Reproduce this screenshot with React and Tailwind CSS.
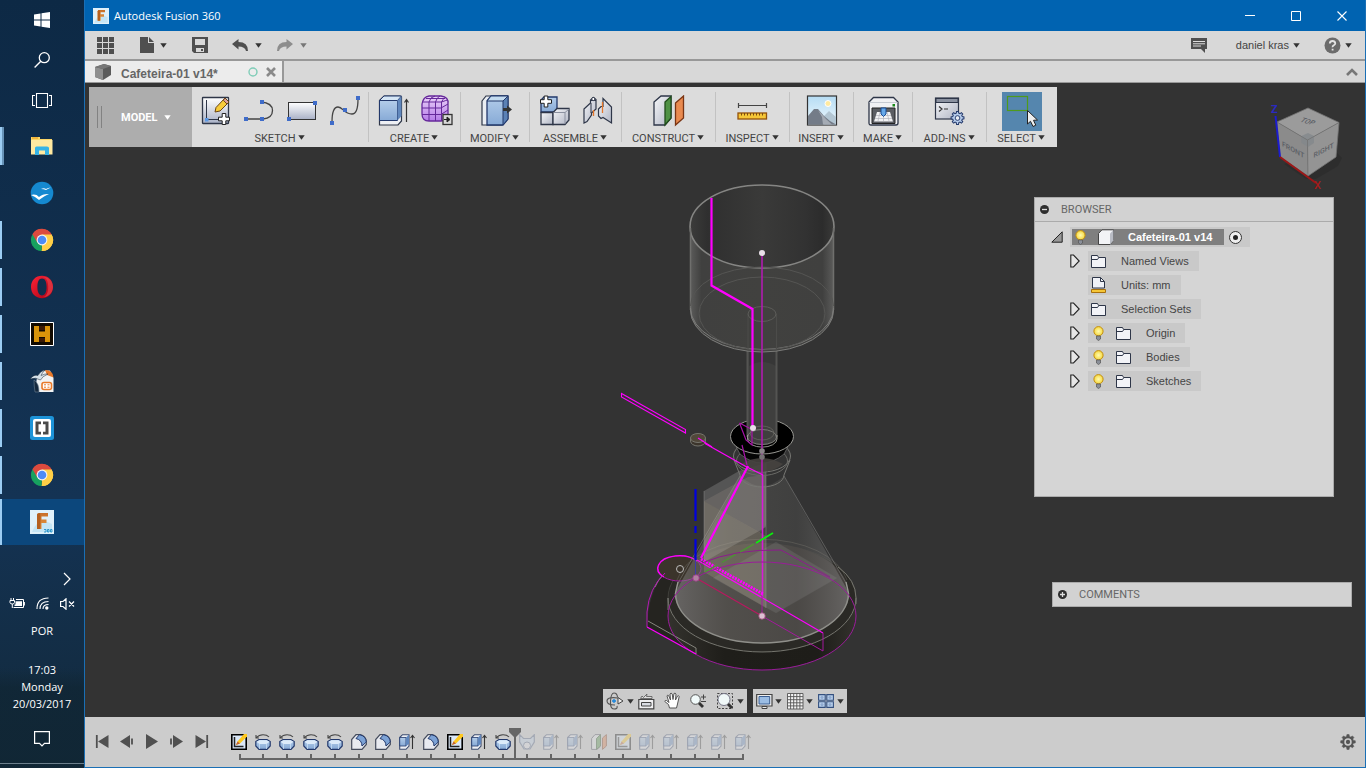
import React from "react";

const Svg = ({ w = 32, h = 32, vb, className = "", children, ...rest }) => (
  <svg width={w} height={h} viewBox={vb || `0 0 ${w} ${h}`} fill="none" className={"block shrink-0 " + className} aria-hidden="true" {...rest}>
    {children}
  </svg>
);

const Caret = ({ color = "#333", className = "" }) => (
  <Svg w={7} h={5} className={className}><path d="M.3 .3H6.700L3.500 4.700Z" fill={color} /></Svg>
);

/* ---------- shared gradients ---------- */
const Defs = () => (
  <svg width="0" height="0" className="absolute" aria-hidden="true">
    <defs>
      <linearGradient id="blueF" x1="0" y1="0" x2="0" y2="1"><stop offset="0" stopColor="#b3cdea" /><stop offset="1" stopColor="#87aad6" /></linearGradient>
      <linearGradient id="greyF" x1="0" y1="0" x2="1" y2="1"><stop offset="0" stopColor="#f6f7f9" /><stop offset="1" stopColor="#b0b5c4" /></linearGradient>
      <linearGradient id="whiteF" x1="0" y1="0" x2="0" y2="1"><stop offset="0" stopColor="#ffffff" /><stop offset="1" stopColor="#a9b1c6" /></linearGradient>
      <linearGradient id="purpF" x1="0" y1="0" x2="0" y2="1"><stop offset="0" stopColor="#ead2f8" /><stop offset="1" stopColor="#b57be8" /></linearGradient>
      <linearGradient id="skyF" x1="0" y1="0" x2="0" y2="1"><stop offset="0" stopColor="#b5dcf4" /><stop offset="1" stopColor="#eef8fd" /></linearGradient>
      <linearGradient id="orangeF" x1="0" y1="0" x2="0" y2="1"><stop offset="0" stopColor="#c8702a" /><stop offset="1" stopColor="#e7983f" /></linearGradient>
      <linearGradient id="operaF" x1="0" y1="0" x2="1" y2="1"><stop offset="0" stopColor="#ff2437" /><stop offset="1" stopColor="#a70014" /></linearGradient>
      <radialGradient id="bulbF"><stop offset="0" stopColor="#fffbb0" /><stop offset="1" stopColor="#f5d840" /></radialGradient>
    </defs>
  </svg>
);

/* ---------- taskbar ---------- */
const WinLogo = () => (<Svg w={16} h={16}><path d="M0 2.4 6.5 1.4V7.5H0ZM7.5 1.2 16 0V7.5H7.5ZM0 8.5H6.5V14.6L0 13.6ZM7.5 8.5H16V16L7.5 14.8Z" fill="#fff" /></Svg>);
const SearchI = () => (<Svg w={16} h={16}><circle cx="10.3" cy="5.7" r="5" stroke="#fff" strokeWidth="1.3" /><path d="M6.8 9.3 .6 15.5" stroke="#fff" strokeWidth="1.4" /></Svg>);
const TaskView = () => (<Svg w={20} h={15}><path d="M4.5 .5H15.5V14.5H4.5ZM3 2.5H.5V12.5H3M17 2.5H19.5V12.5H17" stroke="#fff" strokeWidth="1.1" /></Svg>);
const Explorer = () => (<Svg w={22} h={18}><path d="M0 0H9V2H21V16H0Z" fill="#fbd667" /><path d="M0 3H21.5V17.5H0Z" fill="#ffe9a1" /><path d="M1 1H7" stroke="#f0a92b" strokeWidth="1.4" /><path d="M4 18V11Q4 9.5 5.500 9.500H16Q18 9.500 18 11V18H14V13.500H8V18Z" fill="#36b3e6" /></Svg>);
const OpenOffice = () => (<Svg w={24} h={24}><circle cx="12" cy="12" r="11.3" fill="#1589d0" /><path d="M1 14Q6 12.5 9 16 13 12.500 19 13 15 14.500 9 19 5 15.500 1 14ZM11 8Q14 6.500 16 8 18 6.500 21 6.500 18 7.800 16 9 14 8 11 8Z" fill="#fff" /></Svg>);
const Chrome = () => (
  <Svg w={24} h={24}>
    <path d="M12 12 2.500 6.300A11.100 11.100 0 0 1 21.600 6.500Z" fill="#db4a3e" />
    <path d="M12 12 21.600 6.500A11.100 11.100 0 0 1 11.500 23.100Z" fill="#ffcf47" />
    <path d="M12 12 11.500 23.100A11.100 11.100 0 0 1 2.500 6.300Z" fill="#17a15f" />
    <path d="M12 6.500H21.600A11 11 0 0 0 2.500 6.300L7.300 14.600Z" fill="#db4a3e" />
    <path d="M16.700 14.700 11.500 23.100A11.100 11.100 0 0 0 21.600 6.500H12Z" fill="#ffcf47" />
    <circle cx="12" cy="12" r="5.400" fill="#f4f4f4" /><circle cx="12" cy="12" r="4.300" fill="#4c8bf5" />
  </Svg>
);
const Opera = () => (<Svg w={24} h={24}><path fillRule="evenodd" d="M12 .8C5.500 .8 1 5.500 1 12S5.500 23.200 12 23.200 23 18.500 23 12 18.500 .8 12 .8ZM12 3.600C15.200 3.600 16.600 7 16.600 12S15.200 20.400 12 20.400 7.400 17 7.400 12 8.800 3.600 12 3.600Z" fill="url(#operaF)" /><path d="M13 2.200C20 2 20 22 13 21.800 16.500 23 23 18.500 23 12S17.500 1 13 2.200Z" fill="#e8404a" opacity=".7" /></Svg>);
const HIcon = () => (<Svg w={24} h={24}><path d="M.5 .5H23.500V23.500H.5Z" fill="#120a00" stroke="#fff" /><path d="M4 4H9V9.500H15V4H20V20H15V15H9V20H4Z" fill="#d9940a" /><path d="M9 4H15V8H9ZM9 16H15V20H9Z" fill="#3a1a06" /></Svg>);
const Impress = () => (<Svg w={24} h={24}><path d="M7 8 14 1.500H20L23.500 9V23H5Z" fill="#f1f3f4" /><path d="M4 11Q9 14 9 23H5Q4 17 4 11Z" fill="#14283d" stroke="#6d8294" strokeWidth=".6" /><path d="M15 1Q23 1 23.500 8.500L17 6Z" fill="#e8792a" /><path d="M0 10Q4 5 8 6.500 10 2 15 1 12 4 11 6.500 15 4.500 18 5 12 7.500 10.500 11 6 8 0 10Z" fill="#d5e0e8" stroke="#123" strokeWidth=".5" /><rect x="12" y="13.500" width="9.500" height="7" rx="2" stroke="#e8792a" strokeWidth="1.600" fill="#fff" /><path d="M14 15.800H16M17.500 15.800H19.500M14 18.200H16M17.500 18.200H19.500" stroke="#e8792a" /></Svg>);
const Brackets = () => (<Svg w={24} h={24}><rect width="24" height="24" rx="2.500" fill="#1d93d8" /><rect x="3" y="3" width="18" height="18" rx="2" fill="#fff" /><path d="M11 5.500H5.500V18.500H11V15.800H8.500V8.200H11ZM13 5.500H18.500V18.500H13V15.800H15.500V8.200H13Z" fill="#4a4a4a" /></Svg>);
const FusionI = ({ s = 24, small }) => (
  <Svg w={s} h={s} vb="0 0 24 24"><rect width="24" height="24" fill="#e0f1fa" /><path d="M2 22Q8 6 22 14V22Z" fill="#c4e5f5" /><path d="M7 19V5Q7 3 10 3H18L18 6.500H11.500V9.500H16.500V13H11.500V19Z" fill="url(#orangeF)" /><path d="M7 19V5Q7 3 10 3L10.500 6.500V19Z" fill="#b5601f" />{small && <path d="M14 19.500h2v2.500h-2M17.500 19.500h1.500v2.500h-1.500zM20.500 19.500h1.500v2.500h-1.500z" stroke="#1f8fc8" strokeWidth=".9" />}</Svg>
);

const tasks = [
  ["File Explorer", Explorer, "double"],
  ["OpenOffice", OpenOffice, "none"],
  ["Chrome", Chrome, "on"],
  ["Opera", Opera, "on"],
  ["H editor", HIcon, "on"],
  ["Impress", Impress, "on"],
  ["Brackets", Brackets, "on"],
  ["Chrome window", Chrome, "on"],
];

function Taskbar() {
  return (
    <nav aria-label="Taskbar" className="relative flex w-[84px] shrink-0 flex-col items-center bg-linear-to-b from-[#0d2945] via-[#143354] via-65% to-[#12293b] text-[11px] text-white">
      <button aria-label="Start" className="grid h-10 w-full place-items-center"><WinLogo /></button>
      <button aria-label="Search" className="grid h-10 w-full place-items-center"><SearchI /></button>
      <button aria-label="Task view" className="grid h-10 w-full place-items-center"><TaskView /></button>
      <div className="mt-[3px] flex w-full flex-col gap-px">
        {tasks.map(([name, Icon, mark]) => (
          <button key={name} aria-label={name} className="relative grid h-[46px] w-full place-items-center">
            {mark !== "none" && <span className="absolute top-1 left-0 h-[38px] w-[2px] bg-[#9ccdf3]" />}
            {mark === "double" && <span className="absolute top-1 left-[2px] h-[38px] w-[2px] bg-[#6793b8]" />}
            <Icon />
          </button>
        ))}
        <button aria-label="Fusion 360" className="grid h-[46px] w-full place-items-center border-l-2 border-[#9ccdf3] bg-[#0c477c] pr-[2px]"><FusionI small /></button>
      </div>
      <div className="mt-auto flex w-full flex-col items-center bg-linear-to-b from-transparent from-50% to-[#102532]/70 to-60%">
        <button aria-label="Show hidden icons" className="mr-[9px] self-end p-1"><Svg w={8} h={14}><path d="M1 1 7 7 1 13" stroke="#fff" strokeWidth="1.200" /></Svg></button>
        <div className="mt-[7px] flex items-center gap-[11px]">
          <Svg w={16} h={12}><path d="M2 0V2M4.500 0V2M1 2.500H5.500V4.500Q5.500 6 3.300 6T1 4.500ZM3.300 6V10" stroke="#fff" /><path d="M7 1.500H14.500V9.500H4.500" stroke="#fff" /><path d="M6.500 3.300H13V8H5.500V6.500H6.500Z" fill="#fff" /><path d="M15.300 4V7.500" stroke="#fff" strokeWidth="1.200" /></Svg>
          <Svg w={13} h={13}><path d="M1 12Q1 1 12.500 1M4 12Q4 4.500 12.500 4.500M7 12Q7 7.500 12.500 7.500" stroke="#fff" strokeWidth="1.100" /><circle cx="10.800" cy="11" r="1.700" fill="#fff" /></Svg>
          <Svg w={15} h={12}><path d="M.6 3.500H3L6 .8V11.200L3 8.500H.6ZM9 3.500 14 8.500M14 3.500 9 8.500" stroke="#fff" strokeWidth="1.200" /></Svg>
        </div>
        <span className="mt-[13px] leading-4">POR</span>
        <div className="mt-[22px] text-center leading-[17px]">17:03<br />Monday<br />20/03/2017</div>
        <button aria-label="Notifications" className="mt-[19px] mb-[15px]"><Svg w={16} h={17}><path d="M.6 .6H15.400V12.400H10.500L8 15 5.500 12.400H.6Z" stroke="#fff" strokeWidth="1.200" /></Svg></button>
        <div className="mb-1 h-px w-full bg-[#6c7f8c]" />
      </div>
    </nav>
  );
}

/* ---------- ribbon icons ---------- */
const dk = "#2e3648";
const bl = "#22386b";
const SketchNew = () => (<Svg><rect x="2.500" y="2.500" width="26" height="26" fill="url(#whiteF)" stroke={dk} strokeWidth="1.300" rx=".5" /><path d="M6.500 5V24.500H20" stroke={dk} /><rect x="5" y="23" width="3.500" height="3.500" fill="#5d9ae6" /><path d="M15 17 16 12.500 25 3 29 7 20 16Z" fill="#f7cb3a" stroke="#6a4512" /><path d="M25 3 29 7 27 9 23.300 5.200Z" fill="#e0a0a0" stroke="#6a4512" /><path d="M22.200 18.500H25.800V22.200H29.500V25.800H25.800V29.500H22.200V25.800H18.500V22.200H22.200Z" fill="#fff" stroke="#222" /></Svg>);
const Node = ({ x, y }) => <rect x={x - 2} y={y - 2} width="4" height="4" fill="#3f6cc9" />;
const LineArc = () => (<Svg><path d="M3 24H20Q29.500 23 29.500 15.500T18 7" stroke="#444" strokeWidth="1.300" /><Node x={3} y={24} /><Node x={19} y={24} /><Node x={19} y={7} /></Svg>);
const Rect2 = () => (<Svg><rect x="2.500" y="7.500" width="27" height="17" fill="url(#whiteF)" stroke="#333" /><Node x={3} y={24} /><Node x={29} y={8} /></Svg>);
const Spline = () => (<Svg><path d="M3 27Q3 12 9 12C14 12 15 19 23 19Q29 19 29 4" stroke="#444" strokeWidth="1.300" /><Node x={3} y={28} /><Node x={16} y={15} /><Node x={29} y={3} /></Svg>);
const Extrude = () => (<Svg><path d="M1.500 5.500 6 1H22L23.500 2V26L20 30H1.500Z" fill="#eef0f4" stroke={dk} strokeWidth="1.200" /><path d="M1.500 5.500H19.500V25.500H1.500Z" fill="url(#blueF)" stroke={bl} /><path d="M1.500 5.500 6 1H23.500L19.500 5.500Z" fill="#d5e6f6" stroke={bl} /><path d="M19.500 5.500 23.500 1.500V21L19.500 25.500Z" fill="#6188bd" /><path d="M28.500 27V5M26.500 7.500 28.500 4.500 30.500 7.500" stroke="#333" strokeWidth="1.200" /></Svg>);
const Form = () => (<Svg><path d="M8 1H20Q28 2 27 9V20Q26 26 20 26H8Q1 26 1 19V9Q2 2 8 1Z" fill="url(#purpF)" stroke="#65289a" strokeWidth="1.300" /><path d="M1 13H20L27 9M1 19.500H20L27 15M8 26V7M14.500 26V7M20.500 26V7M1.500 7H20.500Q26 5 26.500 5M8 7Q9 2 14 1M14.500 7Q16 2 19 1M20.500 7Q22 4 24 2.500M5 3.500H24" stroke="#65289a" /><rect x="22" y="19.500" width="9" height="10" fill="#d8d8d8" stroke="#333" strokeWidth="1.300" /><path d="M23 24.500H26.500M26 22 29 24.500 26 27Z" stroke="#222" fill="#222" /></Svg>);
const PressPull = () => (<Svg><path d="M2 6 6 1H27V24L22 30H2Z" fill="#e9edf2" stroke={dk} strokeWidth="1.200" /><path d="M7 6 11 1H28V24L23 30H7Z" fill="url(#blueF)" stroke={bl} strokeWidth="1.300" /><path d="M7 6 11 1H28L23 6Z" fill="#c3dbf0" stroke={bl} /><path d="M23 6 28 1V24L23 30Z" fill="#5b81b5" stroke={bl} /><path d="M23 13H27V10.500L32 14.500 27 18.500V16H23Z" fill="#333" /></Svg>);
const NewComp = () => (<Svg><path d="M2 17V5L5 2H18V17Z" fill="url(#blueF)" stroke={bl} strokeWidth="1.300" /><path d="M2 17.500H14V29.500H2Z" fill="url(#greyF)" stroke={dk} strokeWidth="1.300" /><path d="M14 17.500 18 13.500H30V25L26 29.500H14Z" fill="url(#greyF)" stroke={dk} strokeWidth="1.300" /><path d="M14.500 17.500H26L30 14M26 17.500V29" stroke="#8b91a0" /><path d="M5.200 1H8.800V4.700H12.500V8.300H8.800V12H5.200V8.300H1.500V4.700H5.200Z" fill="#fff" stroke="#222" /></Svg>);
const Joint = () => (<Svg><path d="M2 14 8.500 8V5L11.500 2.500 14 4.500V14L9.500 18V20L5 26.500 2 28Z" fill="url(#greyF)" stroke={dk} strokeWidth="1.200" /><path d="M9 8V18M9 5.500H14" stroke={dk} /><path d="M16.500 14 19 11.500H21V3.500L29.500 12V28L21 22.500 19 23.500 16.500 21Z" fill="url(#greyF)" stroke={dk} strokeWidth="1.200" /><path d="M20.500 18V7M11.500 15V21" stroke="#e5762a" strokeWidth="1.300" /><circle cx="11.300" cy="4" r="1.600" fill="#fff" stroke={dk} /></Svg>);
const Construct = () => (<Svg><path d="M1 7 8 1H18V23L12 30H1Z" fill="url(#greyF)" stroke={dk} strokeWidth="1.300" /><path d="M12 7 18 1.500V23L12 30Z" fill="#4e9145" stroke="#214d1c" strokeWidth="1.300" /><path d="M22.500 8 30.500 1V23L22.500 30Z" fill="#e98a4f" stroke="#7a3514" strokeWidth="1.300" /></Svg>);
const Inspect = () => (<Svg><path d="M1 10.500H30M1.500 8V13M29.500 8V13" stroke="#444" strokeWidth="1.200" /><rect x="1" y="18" width="28.500" height="6" fill="#f5c637" stroke="#93520c" strokeWidth="1.300" /><path d="M4.500 18V20.500M7.500 18V20.500M10.500 18V20.500M13.500 18V20.500M16.500 18V20.500M19.500 18V20.500M22.500 18V20.500M25.500 18V20.500" stroke="#7a4a10" /></Svg>);
const Insert = () => (<Svg><rect x="1.500" y="1" width="29" height="29" fill="url(#skyF)" stroke="#333" strokeWidth="1.200" /><circle cx="22" cy="8.500" r="3" fill="#ffeaa0" stroke="#fff" /><path d="M18 21 23 16 30 22V29.500H18Z" fill="#b3c6d3" /><path d="M2 21 8 14H12L18 21 24 26 30 29.500H2Z" fill="#747c88" /><path d="M12 15 20 24 26 29.500H17L16 22Z" fill="#a5abb4" /></Svg>);
const Make = () => (<Svg><path d="M1 7 5.500 2.500H25.500L30 7V28Q30 30 28 30H3Q1 30 1 28Z" fill="#f1f1f4" stroke={dk} strokeWidth="1.300" /><path d="M1.500 7.500H29.500" stroke="#c6cad2" /><rect x="24.500" y="9" width="2.500" height="2.500" fill="#188a18" /><path d="M4 13H27V28.500H4Z" fill="#5b5d63" stroke="#222" /><path d="M9 17H22L25 26.500H6Z" fill="#f2f2f4" /><path d="M8 20.500H23M7 23.500H24M12 17 10 26M19 17 21 26M15.500 20V26" stroke="#b3b3bb" strokeWidth=".7" /><path d="M13 13H18V19L15.500 21.500 13 19Z" fill="#67a8e8" stroke="#164a96" /></Svg>);
const gearPts = "M14 2h4l.7 3.600 2.600 1.100 3-2.100 2.800 2.800-2.100 3 1.100 2.600 3.600.7v4l-3.600.7-1.100 2.600 2.100 3-2.800 2.800-3-2.100-2.600 1.100L18 30h-4l-.7-4.200-2.600-1.100-3 2.100-2.800-2.800 2.100-3-1.100-2.600-3.600-.7v-4l3.600-.7 1.100-2.600-2.100-3 2.800-2.800 3 2.100 2.600-1.100Z";
const AddIns = () => (<Svg><rect x="1.500" y="3" width="23" height="21" fill="url(#greyF)" stroke={dk} strokeWidth="1.200" /><path d="M2 3.500H24V7.500H2Z" fill="#8a91a0" stroke={dk} /><path d="M5 11.500 8 14 5 16.500M10 14H14" stroke="#333" strokeWidth="1.200" /><g transform="translate(16 15.500) scale(.47)"><path d={gearPts} fill="#b7cdec" stroke={bl} strokeWidth="2.200" /><circle cx="16" cy="16" r="5" fill="#e9edf4" stroke={bl} strokeWidth="2" /></g></Svg>);
const SelectI = () => (<span className="block bg-[#5586ae]"><Svg w={40} h={39}><rect x="5.500" y="4.500" width="20" height="14" stroke="#4f9a1c" strokeWidth="1.200" /><path d="M25.500 18.500V32L28.500 29.300 31 34.500 33.800 33.200 31.500 28.300 35.500 28Z" fill="#eee" stroke="#222" /></Svg></span>);

const groups = [
  ["SKETCH", "w-[177px]", [SketchNew, LineArc, Rect2, Spline]],
  ["CREATE", "w-[92px]", [Extrude, Form]],
  ["MODIFY", "w-[69px]", [PressPull]],
  ["ASSEMBLE", "w-[92px]", [NewComp, Joint]],
  ["CONSTRUCT", "w-[94px]", [Construct]],
  ["INSPECT", "w-[74px]", [Inspect]],
  ["INSERT", "w-[64px]", [Insert]],
  ["MAKE", "w-[59px]", [Make]],
  ["ADD-INS", "w-[74px]", [AddIns]],
  ["SELECT", "w-[70px]", [SelectI]],
];

function Ribbon() {
  return (
    <div className="flex h-[60px] bg-[#dcdcdc] font-['Roboto',sans-serif] text-[11px] text-[#444]">
      <button className="flex w-[103px] items-center bg-[#adadad] pl-2 font-bold text-white">
        <Svg w={6} h={24}><path d="M.5 1V23M4.500 1V23" stroke="#828282" /></Svg>
        <span className="ml-[18px] pt-[2px]">MODEL</span>
        <Caret color="#fff" className="ml-[6px]" />
      </button>
      {groups.map(([name, w, icons], i) => (
        <div key={name} className={"relative flex flex-col items-center pt-1 " + w}>
          <div className="flex h-10 items-center gap-[11px]">{icons.map((I, k) => <button key={k} aria-label={`${name} tool ${k + 1}`}><I /></button>)}</div>
          <button className="flex items-center gap-[2px] pr-[2px] leading-4 whitespace-nowrap">{name}<Caret className="mb-[3px]" /></button>
          {i < groups.length - 1 && <span className="absolute top-[5px] right-0 h-[50px] w-px bg-[#c2c2c2]" />}
        </div>
      ))}
    </div>
  );
}

function ViewCube() {
  return (
    <Svg w={98} h={110} vb="1267 87 98 110" className="font-['Roboto',sans-serif]">
      <path d="M1284 164 1336 152 1342 158 1338 166 1316 179 1306 179Z" fill="#2a2a2a" opacity=".6" />
      <path d="M1308 108 1339 122.500 1307.500 140 1277 122Z" fill="#9b9b9b" />
      <path d="M1277 122 1307.500 140 1308 176 1280 157Z" fill="#8b8b8b" />
      <path d="M1339 122.500 1307.500 140 1308 176 1336 157Z" fill="#949494" />
      <path d="M1301.500 136 1308 133 1314 136 1314 143 1308 147 1301.500 143Z" fill="#82878b" opacity=".75" />
      <path d="M1308 108 1339 122.500 1336 157 1308 176 1280 157 1277 122ZM1277 122 1307.500 140 1339 122.500M1307.500 140 1308 176" stroke="#747474" strokeWidth=".8" />
      <g fill="#5c6066" fontSize="7" fontWeight="500">
        <text transform="translate(1299.500 121.500) rotate(16) skewX(-28)">TOP</text>
        <text transform="translate(1282 146) skewY(29)">FRONT</text>
        <text transform="translate(1313.500 158) skewY(-28)">RIGHT</text>
      </g>
      <path d="M1275.500 116 1280 157" stroke="#1c1ccf" strokeWidth="2" />
      <path d="M1280 157 1316 183" stroke="#9c1717" strokeWidth="2" />
      <text x="1271" y="113" fontSize="11" fontWeight="700" fill="#2a2ac0">Z</text>
      <text x="1314" y="189" fontSize="11" fontWeight="500" fill="#a81a1a">X</text>
    </Svg>
  );
}

/* ---------- browser tree ---------- */
const Bulb = () => (<Svg w={11} h={15}><circle cx="5.500" cy="5.200" r="4.600" fill="url(#bulbF)" stroke="#c28d10" /><path d="M3.500 10H7.500V13L5.500 14.500 3.500 13Z" fill="#8a8f99" stroke="#555" strokeWidth=".7" /></Svg>);
const Folder = () => (<Svg w={15} h={13}><path d="M.5 12.500V.5H6.500L7.500 2.500H14.500V12.500Z" fill="#f2f3f7" stroke={dk} /><path d="M.5 4.500H6.500L7.500 3" stroke={dk} /></Svg>);
const Units = () => (<Svg w={15} h={16}><path d="M1.500 11V.5H9.500L13.500 4.500V11Z" fill="#f0f2f7" stroke={dk} /><path d="M9.500 .5V4.500H13.500" stroke={dk} /><path d="M.5 12.500H14.500V15.500H.5Z" fill="#f5c637" stroke="#a8700c" /></Svg>);

const rows = [
  ["Named Views", false, true],
  ["Units: mm", false, false],
  ["Selection Sets", false, true],
  ["Origin", true, true],
  ["Bodies", true, true],
  ["Sketches", true, true],
];

function Browser() {
  return (
    <section className="mr-[31px] h-[300px] w-[300px] self-end border border-[#ababab] bg-[#d5d5d5] text-[11px] text-[#454545]">
      <header className="flex h-6 items-center border-b border-[#ababab] bg-[#d2d2d2] pl-[5px] font-['Roboto',sans-serif] text-[#666]">
        <button aria-label="Collapse browser"><Svg w={9} h={9}><circle cx="4.500" cy="4.500" r="4.500" fill="#2e2e2e" /><path d="M2 4.500H7" stroke="#ddd" strokeWidth="1.300" /></Svg></button>
        <h2 className="ml-3 pt-[2px]">BROWSER</h2>
      </header>
      <ul className="pt-[3px]">
        <li className="flex h-6 items-center pl-4">
          <button aria-label="Collapse document"><Svg w={12} h={12}><path d="M.8 11.200H11.200V.8Z" fill="#999" stroke="#222" /></Svg></button>
          <div className="ml-[7px] flex h-5 items-center bg-[#c9c9c9] pr-2 pl-[2px]">
            <div className="flex h-4 items-center bg-[#7f7f7f] pr-3 pl-[3px] font-bold text-white">
              <Bulb />
              <Svg w={16} h={16} className="ml-3"><path d="M.5 4.500 4 .8H15.500V11.500L12 15.500H.5Z" fill="#f2f3f6" stroke="#444" /><path d="M12 4.500 15.500 1V11.500L12 15.500Z" fill="#b9bcc4" /></Svg>
              <span className="ml-[14px]">Cafeteira-01 v14</span>
            </div>
            <input type="radio" name="active" defaultChecked aria-label="Activate component" className="relative ml-[5px] size-[13px] appearance-none rounded-full border border-[#333] bg-[#eee] before:absolute before:inset-[3px] before:rounded-full before:bg-[#222]" />
          </div>
        </li>
        {rows.map(([name, bulb, arrow]) => (
          <li key={name} className="flex h-6 items-center pl-[35px]">
            <span className="w-[18px]">{arrow && <button className="block" aria-label={`Expand ${name}`}><Svg w={10} h={14}><path d="M.8 1 3.500 1 9.200 7 3.500 13H.8Z" fill="#e6e6e6" stroke="#222" strokeWidth="1.100" /></Svg></button>}</span>
            <div className="flex h-5 items-center bg-[#c9c9c9] pr-[10px] pl-[3px]">
              {bulb && <span className="mr-3 pl-[2px]"><Bulb /></span>}
              {arrow ? <Folder /> : <Units />}
              <span className="ml-[15px]">{name}</span>
            </div>
          </li>
        ))}
      </ul>
    </section>
  );
}

/* ---------- 3D model ---------- */
function Model() {
  const M = "#ff00ff";
  return (
    <svg viewBox="85 83 1280 634" className="absolute inset-0 size-full" fill="none" role="img" aria-label="Coffee maker model">
      <defs>
        <linearGradient id="cyl" x1="0" x2="1" y1="0" y2="0"><stop offset="0" stopColor="#5c5c5b" /><stop offset=".08" stopColor="#40403f" /><stop offset=".5" stopColor="#41413f" /><stop offset=".92" stopColor="#40403f" /><stop offset="1" stopColor="#5c5c5b" /></linearGradient>
        <linearGradient id="inn" x1="0" x2="1" y1="0" y2="0"><stop offset="0" stopColor="#3c3c3b" /><stop offset=".12" stopColor="#2f2f2f" /><stop offset=".5" stopColor="#3a3a39" /><stop offset=".8" stopColor="#323232" /><stop offset=".92" stopColor="#2c2c2c" /><stop offset="1" stopColor="#3a3a39" /></linearGradient>
        <linearGradient id="cone" x1="0" x2="1" y1="0" y2="0"><stop offset="0" stopColor="#888" stopOpacity=".5" /><stop offset=".3" stopColor="#6a6a66" stopOpacity=".35" /><stop offset=".7" stopColor="#585856" stopOpacity=".35" /><stop offset="1" stopColor="#888" stopOpacity=".5" /></linearGradient>
        <linearGradient id="base" x1="0" x2="1" y1="0" y2="0"><stop offset="0" stopColor="#33322d" /><stop offset=".3" stopColor="#1f1e1a" /><stop offset=".8" stopColor="#1e1d19" /><stop offset="1" stopColor="#33322d" /></linearGradient>
      </defs>

      {/* base and side lobe */}
      <path d="M665 573Q648 592 647 627L696 654V600Z" fill="#252420" />
      <path d="M668 598A94 54 0 0 1 856 598V616A94 54 0 0 1 668 616Z" fill="url(#base)" />
      <ellipse cx="762" cy="598" rx="94" ry="54" fill="#2a2925" />
      <path d="M668 598A94 54 0 0 1 856 598" stroke="#6b6b66" strokeWidth=".8" opacity=".4" />
      <path d="M838 567Q856 580 856 598M668 598A94 54 0 0 0 856 598M668 598V610M856 598V604" stroke="#75756e" />
      <ellipse cx="762" cy="593" rx="86.500" ry="50" fill="#44403d" />
      <path d="M655 587Q660 576 666 573L680 578M648 621 696 648V654" stroke="#85857d" />
      <ellipse cx="679.500" cy="568.500" rx="21.500" ry="12.500" fill="#3b342b" stroke="#a31aa3" />
      <path d="M664 577Q655 572 658.500 565A21.500 12.500 0 0 1 697 561" stroke={M} strokeWidth="1.300" />

      {/* flask */}
      <path d="M740 476 675 593A86.500 50 0 0 0 849 593L784 476Q762 496 740 476Z" fill="url(#cone)" />
      <path d="M740 476 678 583M784 476 846 583" stroke="#8a8a88" strokeWidth="1" opacity=".5" />
      <path d="M675.500 593A86.500 50 0 0 0 848.500 593" stroke="#8f8f8a" strokeWidth="1.600" />
      <path d="M677 580A86.500 50 0 0 1 847 580" stroke="#77756f" strokeWidth=".8" opacity=".5" />
      <path d="M848.500 593 846 582M675.500 593 678 582" stroke="#9a9a94" strokeWidth="1.300" />

      {/* origin planes */}
      <path d="M704 491 739 471 766 463V527L704 562Z" fill="#bbb" opacity=".25" />
      <path d="M704 501 766 536V608L704 572Z" fill="#c9b896" opacity=".22" />
      <path d="M704 491V560M766 463V608" stroke="#999" strokeWidth=".8" opacity=".5" />
      <path d="M713 578 776 542 837 578 776 613Z" fill="#aaa" opacity=".17" stroke="#999" strokeOpacity=".4" strokeWidth=".7" />
      <path d="M704 501 748 477 766 475V525L760 533Z" fill="#9a9186" opacity=".25" />

      {/* neck and stopper */}
      <ellipse cx="762" cy="456" rx="28.500" ry="16" stroke="#777773" />
      <ellipse cx="762" cy="461" rx="25.500" ry="14.500" stroke="#6a6a66" />
      <path d="M734 460 740 475A22 12 0 0 0 784 475L790 460" stroke="#777773" />
      <path d="M731 440Q736 445 740 454Q762 472 784 454Q788 445 793 440Z" fill="#050505" stroke="#888" strokeWidth=".5" />
      <path d="M741 464Q762 452 783 464Q775 471 762 472Q749 471 741 464Z" fill="#46433f" opacity=".9" />
      <ellipse cx="762" cy="436.500" rx="31.500" ry="17.500" fill="#000" stroke="#999994" strokeWidth="1" />

      {/* tube */}
      <path d="M747.500 314H777V437A14.500 8 0 0 1 747.500 437Z" fill="#3f3f3e" />
      <path d="M749 350H776V366Q762 358 749 366Z" fill="#303030" opacity=".5" />
      <path d="M747.500 314V437M776.500 314V437" stroke="#545452" strokeWidth="2" />
      <ellipse cx="762" cy="437" rx="14.500" ry="7.500" stroke="#7a7a76" />
      <path d="M747.500 435V439A14.500 8 0 0 0 777 439V435" stroke="#95958f" />
      <ellipse cx="762" cy="433" rx="12" ry="7" stroke="#66665f" strokeWidth=".8" />

      {/* upper chamber */}
      <path d="M690 226V310A72 42 0 0 0 834 310V226Z" fill="url(#cyl)" />
      <ellipse cx="762" cy="226.500" rx="72" ry="41.500" fill="url(#inn)" stroke="#858583" strokeWidth="1.600" />
      <path d="M690.500 228V310M833.500 228V310" stroke="#6f6f6d" strokeWidth="1.500" />
      <path d="M690.500 308A71.500 41.500 0 0 0 833.500 308M690.500 310A71.500 42 0 0 0 833.500 310" stroke="#7c7c7a" strokeWidth="1" />
      <path d="M690.500 306A71.500 39 0 0 1 833.500 306" stroke="#555553" />
      <ellipse cx="762" cy="313.500" rx="63" ry="36.500" stroke="#555553" />
      <path d="M748 314V350M776.500 314V350" stroke="#4c4c4a" />
      <ellipse cx="762" cy="314" rx="14" ry="7.500" stroke="#5c5c59" />

      {/* sketches */}
      <g stroke={M}>
        <path d="M711.500 198V285.500L752.500 309V428" strokeWidth="2.200" />
        <path d="M762 253V475" stroke="#b01bb0" strokeWidth="1.600" />
        <path d="M762.500 475V597" stroke="#d81bd8" strokeWidth="1.600" />
        <path d="M748 466 701 558" strokeWidth="2.200" />
        <path d="M701 559 763 594" strokeWidth="3" strokeDasharray="2 1" />
        <path d="M697 560 823 633" strokeWidth="1.200" />
        <path d="M823 633V651L762 616V596" stroke="#a3199d" />
        <path d="M762 616 696 578" stroke="#b81860" strokeWidth="1.200" />
        <path d="M697 439 745 466 763 475" strokeWidth="1.200" />
        <path d="M621.500 393.500V397L685.500 433V429.500Z" strokeWidth="1.100" />
        <path d="M739.500 423 750 428.500M739.500 423 746 440 752 445V430M742 445 747 465" stroke="#a714a7" strokeWidth="1.200" />
        <ellipse cx="762" cy="616" rx="94" ry="54" stroke="#9a1c9a" />
        <path d="M702 563Q735 549 781 550L830 577" stroke="#8c1c8c" />
        <path d="M665 573Q649 588 647 612V627" stroke="#b51ab5" />
        <path d="M647 627 696 654" strokeWidth="1.300" />
      </g>
      <path d="M690.500 438V441A7.500 5 0 0 0 705.500 441V438" fill="#3c352c" stroke="#75756d" />
      <ellipse cx="698" cy="438" rx="7.500" ry="4.500" fill="#51473a" stroke="#75756d" />
      <path d="M698 438 712 447" stroke={M} strokeWidth="1.200" />

      {/* axes */}
      <path d="M695.500 489V521M695.500 526V533M695.500 539V560" stroke="#0000e0" strokeWidth="2.200" />
      <path d="M695.500 560V577" stroke="#3c3ca8" />
      <path d="M773 533 756 543" stroke="#0cf00c" strokeWidth="1.800" />
      <path d="M754 544 705 572" stroke="#4f8f38" strokeWidth="1.600" strokeDasharray="16 5" />

      {/* points */}
      <circle cx="762" cy="253" r="3" fill="#e8e0e8" />
      <circle cx="753" cy="428" r="3" fill="#e8dde8" />
      <circle cx="762" cy="451" r="2.800" fill="#8a848a" />
      <circle cx="762" cy="457" r="2.800" fill="#777377" />
      <circle cx="762" cy="616" r="3.200" fill="#dcc0d2" stroke="#a65080" strokeWidth=".8" />
      <circle cx="696" cy="578" r="3.200" fill="#b080a0" stroke="#a0388a" strokeWidth=".8" />
      <circle cx="680" cy="569" r="3.500" stroke="#bbb" fill="#3b342b" />
    </svg>
  );
}

/* ---------- navigation bar ---------- */
const Orbit = () => (<Svg w={18} h={18}><path d="M11.500 5Q11 1 8 1T4.500 9 8 17 11 14" stroke="#555" strokeWidth="1.100" /><path d="M12 6Q1 4.500 1 9 1 13 9 13" stroke="#555" strokeWidth="1.100" /><path d="M12 5.500 17 9 12 12Z" fill="#eee" stroke="#444" /><path d="M6 9H10M8 7V11" stroke="#1684dd" strokeWidth="1.300" /></Svg>);
const LookAt = () => (<Svg w={17} h={17}><path d="M.8 6.500H15.800V15.800H.8Z" fill="#f0f0f2" stroke="#444" strokeWidth="1.200" /><path d="M3.500 9.500H13V13H3.500Z" fill="#dadde4" stroke="#444" /><path d="M2.500 5.500 4 3 5.500 4.500 9 1 8.500 3.500H14V5.500Z" fill="#ddd" stroke="#555" strokeWidth=".8" /></Svg>);
const Hand = () => (<Svg w={17} h={18}><path d="M5.500 16 4.500 12.500 .8 9.500Q1 8 2.500 8.500L5 10.500 3 4Q3.500 2.500 4.600 3.500L6.500 8 6 2Q7 .2 8.200 2L9 7.500 10 1.500Q11.200 .5 12 2L11.500 8 13.500 4Q15 3.200 15.200 4.500L13.500 12 12.500 16Z" fill="#fff" stroke="#555" /></Svg>);
const Zoom = () => (<Svg w={17} h={17}><circle cx="5.500" cy="6.500" r="4.800" fill="#f1fafa" stroke="#555" /><path d="M9 10 13 14" stroke="#333" strokeWidth="2.800" /><path d="M11 4H16M13.500 1.500V6.500M11 8.500H16" stroke="#444" /></Svg>);
const Fit = () => (<Svg w={18} h={18}><path d="M1.500 1.500H16.500V16.500H1.500Z" stroke="#444" strokeDasharray="2 1.500" /><circle cx="8" cy="7.500" r="6" fill="#f0f8f8" stroke="#778" /><path d="M12 12 16 16" stroke="#333" strokeWidth="3" /></Svg>);
const Display = () => (<Svg w={17} h={17}><path d="M.7 1.500H16V13H.7Z" fill="#eee" stroke="#444" strokeWidth="1.200" /><path d="M3 3.500H13.700V11H3Z" fill="#9bbde4" stroke="#3a5e92" /><path d="M6 13.500H11V15.500H6Z" fill="#eee" stroke="#444" /></Svg>);
const GridI = () => (<Svg w={17} h={17}><path d="M.5 .5H16V16H.5Z" fill="#f5f5f5" /><path d="M.5 .5V16M3.600 .5V16M6.700 .5V16M9.800 .5V16M12.900 .5V16M16 .5V16M.5 .5H16M.5 3.600H16M.5 6.700H16M.5 9.800H16M.5 12.900H16M.5 16H16" stroke="#555" strokeWidth=".9" /></Svg>);
const Views = () => (<Svg w={16} h={14}><path d="M.6 .6H7.200V6.300H.6ZM8.800 .6H15.400V6.300H8.800ZM.6 7.700H7.200V13.400H.6ZM8.800 7.700H15.400V13.400H8.800Z" fill="#b9d0ec" stroke="#34507f" strokeWidth="1.100" /><path d="M3 2.800H5V4.200H3ZM11 2.800H13V4.200H11ZM3 9.900H5V11.300H3ZM11 9.900H13V11.300H11Z" stroke="#6d8cb8" strokeWidth=".6" /></Svg>);

function NavBar() {
  return (
    <div className="mt-auto mb-1 flex gap-[6px] self-center">
      <div className="flex h-6 items-center bg-[#cbcbcb] px-[3px]">
        <button aria-label="Orbit" className="flex items-center gap-[3px]"><Orbit /><Caret /></button>
        <button aria-label="Look at" className="ml-1"><LookAt /></button>
        <button aria-label="Pan" className="ml-[9px]"><Hand /></button>
        <button aria-label="Zoom" className="ml-[9px]"><Zoom /></button>
        <button aria-label="Fit" className="ml-[9px] flex items-center gap-[3px]"><Fit /><Caret /></button>
      </div>
      <div className="flex h-6 items-center gap-[5px] bg-[#cbcbcb] px-[3px]">
        <button aria-label="Display settings" className="flex items-center gap-[2px]"><Display /><Caret /></button>
        <button aria-label="Grid settings" className="flex items-center gap-[2px]"><GridI /><Caret /></button>
        <button aria-label="Viewports" className="flex items-center gap-[3px]"><Views /><Caret /></button>
      </div>
    </div>
  );
}

/* ---------- timeline ---------- */
const TSketch = () => (<Svg w={16} h={16}><path d="M.8 .8H15.200V15.200H.8Z" fill="#dbe8f8" stroke="#000" strokeWidth="1.600" /><path d="M3.500 3V12.500H12.500" stroke="#222" strokeWidth="1.500" /><path d="M5 11 6.500 7.500 13 0H16V2.500L9 9.500Z" fill="#ffc81e" /><path d="M5 11 6.500 7.500 9 9.500Z" fill="#c0603a" /></Svg>);
const TRev = () => (<Svg w={16} h={16}><path d="M1.500 3.500Q4 .7 8 .7T14 3M1 1V4H4" stroke="#444" strokeWidth="1.100" /><path d="M.8 7.500 4 5.500H12L15.200 7.500V12L12 15.300H4L.8 12Z" fill="url(#blueF)" stroke={bl} strokeWidth="1.200" /><path d="M1.500 7.800 4.500 6.300H11.500L14.500 7.800 11.500 10H4.500Z" fill="#dcebfa" /><path d="M11.500 10V15M4.500 10V15" stroke="#c9ddf3" strokeWidth=".8" /></Svg>);
const TFillet = () => (<Svg w={16} h={16}><path d="M.7 15.300V5.500L5 .7H9Q15 2 15.300 8V10.500L11 15.300Z" fill="#e8eaf0" stroke="#444b5c" strokeWidth="1.200" /><path d="M5 4.500 8.500 .7Q15 2 15.300 8L11 12Q11 6 5 4.500Z" fill="#7da3d6" stroke={bl} /></Svg>);
const TExt = () => (<Svg w={16} h={16}><path d="M.7 3.500 3.500 .7H10V12L7 15.300H.7Z" fill="#eef0f5" stroke="#3c4c70" strokeWidth="1.100" /><path d="M.7 3.500H7V12H.7Z" fill="url(#blueF)" stroke={bl} strokeWidth=".8" /><path d="M7 3.500 10 .7V9.500L7 12.500Z" fill="#5f86bd" /><path d="M13.500 15V2M11.500 4 13.500 1.500 15.500 4" stroke="#333" strokeWidth="1.100" /></Svg>);
const TLoft = () => (<Svg w={16} h={16}><path d="M.7 .7 4.500 4.500H11.500L15.300 .7V8L11 15H5L.7 8Z" fill="#bcd0e8" stroke="#4a5c80" strokeWidth="1.200" /><circle cx="8" cy="11.500" r="3.500" fill="#e4e6ea" stroke="#4a5c80" /></Svg>);
const TPlane = () => (<Svg w={16} h={16}><path d="M.6 4.500 4 .6H9.500V12L6 15.400H.6Z" fill="#e8eaee" stroke="#445" /><path d="M5.500 4.500 9.500 .6V12L5.500 15.400Z" fill="#4e9145" stroke="#214d1c" /><path d="M11.500 4 15.400 .6V12L11.500 15.400Z" fill="#e07a45" stroke="#7a3514" /></Svg>);
const feats = [TSketch, TRev, TRev, TRev, TRev, TFillet, TFillet, TExt, TFillet, TSketch, TExt, TRev, TLoft, TExt, TExt, TPlane, TSketch, TExt, TExt, TExt, TExt, TExt];
const plays = [
  ["First", "M2.800 1V14", "M14.500 1V14L4 7.500Z"],
  ["Previous", "M13 4.500V10.500", "M11 1V14L1 7.500Z"],
  ["Play", "", "M2 0 14 7.500 2 15Z"],
  ["Next", "M2 4.500V10.500", "M4 1V14L14 7.500Z"],
  ["Last", "M13.200 1V14", "M1.500 1V14L12 7.500Z"],
];

function Timeline() {
  return (
    <footer className="flex h-[50px] shrink-0 items-start bg-[#cccccc] px-1 pt-[17px]">
      <div className="flex">
        {plays.map(([n, a, b]) => (
          <button key={n} aria-label={n} className="grid w-[25px] place-items-center"><Svg w={16} h={15}><path d={a} stroke="#505050" strokeWidth="1.800" /><path d={b} fill="#505050" /></Svg></button>
        ))}
      </div>
      <div className="relative ml-[13px]">
        <ol className="flex">
          {feats.map((F, i) => (
            <li key={i} className={"grid w-6 place-items-center" + (i > 11 ? " opacity-30" : "")}><button aria-label={`Feature ${i + 1}`}><F /></button></li>
          ))}
        </ol>
        <Svg w={528} h={6} className="mt-1"><path d={feats.map((_, i) => `M${12 + i * 24 + (i ? 0 : 1)} 0V5`).join("") + "M12 5H517"} stroke="#666" strokeWidth="2" /></Svg>
        <Svg w={12} h={32} className="absolute -top-[6px] left-[282px]"><path d="M0 0H12V4L7 9V31H5V9L0 4Z" fill="#666" /></Svg>
      </div>
      <button aria-label="Timeline settings" className="mr-[5px] ml-auto"><Svg w={16} h={16} vb="1 1 30 30"><path d={gearPts} fill="#555" stroke="#555" /><circle cx="16" cy="16" r="5.500" fill="#555" stroke="#ccc" strokeWidth="3" /></Svg></button>
    </footer>
  );
}

/* ---------- window ---------- */
export default function App() {
  return (
    <div className="flex min-h-screen font-['Liberation_Sans',Arial,sans-serif]">
      <Defs />
      <div className="flex font-['Open_Sans',sans-serif]"><Taskbar /></div>
      <div className="flex min-w-0 flex-1 flex-col border-r border-b border-l border-[#1a6fb5] bg-[#333333]">
        <div className="flex h-[31px] shrink-0 items-center bg-[#0063b1] pl-2 font-['Open_Sans',sans-serif] text-[11px] text-white">
          <FusionI s={16} />
          <h1 className="ml-[5px] pt-px">Autodesk Fusion 360</h1>
          <div className="ml-auto flex h-full">
            <button aria-label="Minimize" className="grid w-[46px] place-items-center"><Svg w={10} h={10}><path d="M0 4.500H10" stroke="#fff" /></Svg></button>
            <button aria-label="Maximize" className="grid w-[46px] place-items-center"><Svg w={10} h={10}><path d="M.5 .5H9.500V9.500H.5Z" stroke="#fff" /></Svg></button>
            <button aria-label="Close" className="grid w-[46px] place-items-center"><Svg w={10} h={10}><path d="M.5 .5 9.500 9.500M9.500 .5 .5 9.500" stroke="#fff" strokeWidth="1.100" /></Svg></button>
          </div>
        </div>

        <div className="flex h-[30px] shrink-0 items-center border-b-2 border-[#989898] bg-[#d8d8d8] pr-[13px] pl-3 text-[11px] text-[#444]">
          <button aria-label="Data panel"><Svg w={17} h={17}><path d="M0 0h5v5H0zM6 0h5v5H6zM12 0h5v5h-5zM0 6h5v5H0zM6 6h5v5H6zM12 6h5v5h-5zM0 12h5v5H0zM6 12h5v5H6zM12 12h5v5h-5z" fill="#4f4f4f" /></Svg></button>
          <button aria-label="File" className="ml-[26px] flex items-center gap-[6px]"><Svg w={14} h={16}><path d="M0 0H8V6H14V16H0ZM9 0 14 5H9Z" fill="#4f4f4f" /></Svg><Caret /></button>
          <button aria-label="Save" className="ml-[25px]"><Svg w={16} h={16}><path fillRule="evenodd" d="M0 0H16V16H2L0 14ZM3 2V8H13V2ZM4 11V15H12V11Z" fill="#4f4f4f" /><path d="M9 12H11V14H9Z" fill="#4f4f4f" /></Svg></button>
          <button aria-label="Undo" className="ml-6 flex items-center gap-[7px]"><Svg w={16} h={12}><path d="M0 5 6.500 0V3Q16 3 16 12H14Q13 7.500 6.500 7.500V10.500Z" fill="#4f4f4f" /></Svg><Caret /></button>
          <button aria-label="Redo" className="ml-[15px] flex items-center gap-[7px]"><Svg w={16} h={12}><path d="M16 5 9.500 0V3Q0 3 0 12H2Q3 7.500 9.500 7.500V10.500Z" fill="#8d8d8d" /></Svg><Caret color="#777" /></button>
          <button aria-label="Notifications" className="mr-[29px] ml-auto"><Svg w={16} h={15}><path d="M0 0H16V11H14V15L10 11H0Z" fill="#4f4f4f" /><path d="M2 3.500H14M2 5.800H14M2 8H10" stroke="#ddd" /></Svg></button>
          <button className="flex items-center gap-1">daniel kras<Caret /></button>
          <button aria-label="Help" className="ml-6 flex items-center gap-1"><Svg w={17} h={17}><circle cx="8.500" cy="8.500" r="8" fill="#6b6b6b" /><path d="M5.800 6.500Q6 4 8.500 4T11.300 6.300Q11.300 7.500 9.800 8.300T8.600 10.300M8.600 11.800V13.500" stroke="#e4e4e4" strokeWidth="1.800" /></Svg><Caret /></button>
        </div>

        <div className="flex h-[22px] shrink-0 items-stretch border-b border-[#989898] bg-[#d8d8d8]">
          <div className="flex w-[199px] items-center border-r-2 border-[#989898] bg-[#ececec] pl-[10px] text-xs font-bold text-[#666]">
            <Svg w={16} h={16}><path d="M0 3 9 0 16 2V11L8 16 0 13Z" fill="#5b5b5b" /><path d="M0 3 8 5V16L0 13Z" fill="#8f8f8f" /><path d="M0 3 9 0 16 2 8 5Z" fill="#777" /></Svg>
            <span className="ml-[10px] pt-1 leading-4">Cafeteira-01 v14*</span>
            <Svg w={10} h={10} className="ml-auto"><circle cx="5" cy="5" r="4" stroke="#80cdb8" strokeWidth="1.400" /></Svg>
            <button aria-label="Close tab" className="mr-[6px] ml-2"><Svg w={10} h={10}><path d="M1 1 9 9M9 1 1 9" stroke="#8a8a8a" strokeWidth="2.600" /></Svg></button>
          </div>
          <button aria-label="Collapse toolbar" className="mr-[7px] ml-auto"><Svg w={12} h={8}><path d="M1 7 6 2 11 7" stroke="#777" strokeWidth="2.600" /></Svg></button>
        </div>

        <main className="relative flex flex-1 flex-col pt-1">
          <Model />
          <div className="relative flex flex-1 flex-col">
            <div className="flex items-start justify-between pl-1"><Ribbon /><ViewCube /></div>
            <Browser />
            <section className="mt-[85px] mr-[13px] flex h-[25px] w-[300px] items-center self-end border border-[#ababab] bg-[#d2d2d2] pl-[5px] font-['Roboto',sans-serif] text-[11px] text-[#666]">
              <button aria-label="Expand comments"><Svg w={9} h={9}><circle cx="4.500" cy="4.500" r="4.500" fill="#2e2e2e" /><path d="M2 4.500H7M4.500 2V7" stroke="#ddd" strokeWidth="1.300" /></Svg></button>
              <h2 className="ml-3 pt-[2px]">COMMENTS</h2>
            </section>
            <NavBar />
          </div>
        </main>
        <Timeline />
      </div>
    </div>
  );
}
